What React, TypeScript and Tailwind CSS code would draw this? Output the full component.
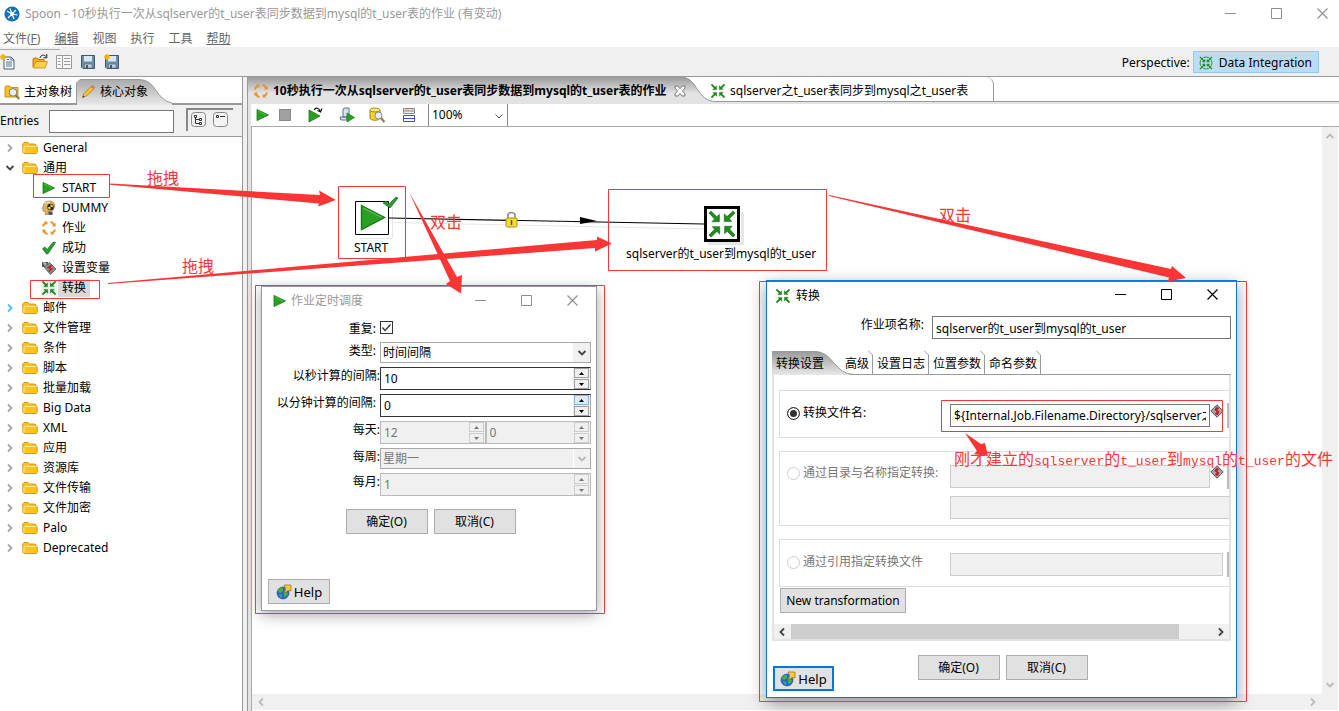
import type { ReactNode } from "react"

const treeFolders = ["邮件", "文件管理", "条件", "脚本", "批量加载", "Big Data", "XML", "应用", "资源库", "文件传输", "文件加密", "Palo", "Deprecated"]

const menus = [
  { label: "文件(", key: "F", rest: ")" },
  { label: "", key: "编辑", rest: "" },
  { label: "视图", key: "", rest: "" },
  { label: "执行", key: "", rest: "" },
  { label: "工具", key: "", rest: "" },
  { label: "", key: "帮助", rest: "" },
]

function Svg({ size = 16, children }: { size?: number; children: ReactNode }) {
  return (
    <svg width={size} height={size} viewBox="0 0 16 16" className="block shrink-0" aria-hidden="true">
      {children}
    </svg>
  )
}

function TransIcon({ size = 16 }: { size?: number }) {
  const arrow = "M1 2.1 2.1 1 5.2 4.1 6.6 2.8V6.8H2.6L4 5.3Z"
  return (
    <Svg size={size}>
      <g fill="#1f8a1f" stroke="#14600f" strokeWidth=".3">
        <path d={arrow} />
        <path d={arrow} transform="rotate(90 8 8)" />
        <path d={arrow} transform="rotate(180 8 8)" />
        <path d={arrow} transform="rotate(270 8 8)" />
      </g>
    </Svg>
  )
}

function JobIcon() {
  const arrow = "M1.2 6.6 1.6 4.4 3.8 2.6 2.8 1.4H6.4V5L5.2 4 3.4 5.4 2.6 6.8Z"
  return (
    <Svg>
      <g fill="#e8922a">
        <path d={arrow} />
        <path d={arrow} transform="rotate(90 8 8)" />
        <path d={arrow} transform="rotate(180 8 8)" />
        <path d={arrow} transform="rotate(270 8 8)" />
      </g>
    </Svg>
  )
}

function PlayIcon({ size = 16 }: { size?: number }) {
  return (
    <Svg size={size}>
      <path d="M2 2.4 13.5 8 2 13.6Z" fill="#2aa022" stroke="#177a14" strokeWidth=".8" />
      <path d="M2.9 3.9 11 8" stroke="#6cc765" strokeWidth=".6" />
    </Svg>
  )
}

function FolderIcon() {
  return (
    <Svg>
      <path d="M.8 12.5V3.8L2 2.5H6L7.2 4H13L14 5V6L15.2 6.5V12.5L14.2 13.5H1.8Z" fill="#fdc21c" stroke="#c88a08" strokeWidth=".8" />
      <path d="M2 13V7.5L3 6.5H14.6" fill="none" stroke="#fff0a0" strokeWidth=".9" />
    </Svg>
  )
}

function CheckIcon({ size = 16 }: { size?: number }) {
  return (
    <Svg size={size}>
      <path d="M1.5 8.8 3.8 7 6.2 9.5 12 2.2 14.6 2.4 7 13.8 5.4 14Z" fill="#2a9a32" stroke="#14691b" strokeWidth=".7" />
    </Svg>
  )
}

function DummyIcon() {
  return (
    <Svg>
      <path d="M4 14.5 4.5 12 2 11 1.8 9.5 1 8.5 2.2 6.5C2 3 5 1 8.5 1 12.5 1 14.500 4 13.500 7.500L12 10.500 8 11.5 7 14.5Z" fill="#d8b060" stroke="#a07b35" strokeWidth=".6" />
      <path d="M4 4C5 2.500 7 2 9 2.200" fill="none" stroke="#f4dfa6" strokeWidth="1.200" />
      <circle cx="9.5" cy="7" r="3.2" fill="#222" />
      <path d="M9.5 7V4.2A3 3 0 0 1 12.2 7ZM9.5 7V9.8A3 3 0 0 1 6.8 7Z" fill="#f3d43b" />
      <path d="M7.5 11.500H11.500V15H7.500Z" fill="#555" />
    </Svg>
  )
}

function VarIcon() {
  return (
    <Svg>
      <path d="M1 2H7V7H1Z" fill="#555" />
      <path d="M2 3H4V6M5 3V6" stroke="#ddd" fill="none" />
      <path d="M3 7 8.5 2.5 15 9 9.5 14.5Z" fill="#8b8b8b" stroke="#555" strokeWidth=".8" />
      <path d="M10.5 5.5 7.5 7.5 10.5 9 8 11.5" fill="none" stroke="#c61b1b" strokeWidth="1.6" />
    </Svg>
  )
}

function DiamondIcon() {
  return (
    <svg width="14" height="14" viewBox="0 0 14 14" className="block shrink-0" aria-hidden="true">
      <path d="M7 .8 13.2 7 7 13.2.8 7Z" fill="#a5a5a5" stroke="#444" strokeWidth=".9" />
      <path d="M8.8 4.3H6L5.4 6 8.4 7.6 7.8 9.5H5.2M7 3V11" fill="none" stroke="#c9141e" strokeWidth="1.3" />
    </svg>
  )
}

function GlobeIcon() {
  return (
    <Svg>
      <circle cx="7" cy="9" r="6" fill="#2468d8" stroke="#1b3f93" strokeWidth=".6" />
      <path d="M1.500 7 4 4 7 4 7 7 4 9ZM3 10 6 11 6 14 4 13ZM8 9 11 8 12 10 10 13 8 12Z" fill="#3eb53a" />
      <path d="M8 1H15V7L13 6.5C11 7 10 8.500 7.5 8.500 9 7.5 9.500 5.5 9.500 4.500Z" fill="#f9c73c" stroke="#9a6d10" strokeWidth=".7" />
    </Svg>
  )
}

function SearchFolder() {
  return (
    <Svg>
      <path d="M1 13V3L2 2H6L7 3.5H14V13Z" fill="#fbc01e" stroke="#b98008" strokeWidth=".8" />
      <circle cx="9" cy="8.4" r="3.8" fill="#e8eef3" stroke="#777" />
      <path d="M11.8 11.2 15.2 15" stroke="#9a7440" strokeWidth="2" />
    </Svg>
  )
}

function PencilIcon() {
  return (
    <Svg>
      <path d="M2.5 13.5 4 9.5 11 2.5 13.5 5 6.5 12Z" fill="#f5c62c" stroke="#9d6b15" strokeWidth=".7" />
      <path d="M11 2.5 12.6 1 15 3.4 13.5 5Z" fill="#df6a72" />
      <path d="M2.5 13.5 3.2 11.5 4.6 12.8Z" fill="#333" />
    </Svg>
  )
}

function FileIcon() {
  return (
    <Svg>
      <path d="M4 3H11L14 6V15H4Z" fill="#f4f8fb" stroke="#456078" />
      <path d="M11 3V6H14M6 8H12M6 10H12M6 12H12M7 5.5H9" fill="none" stroke="#58758c" />
      <path d="M3 0V6M0 3H6M1 1 5 5M5 1 1 5" stroke="#f4b400" strokeWidth="1.3" />
    </Svg>
  )
}

function OpenIcon() {
  return (
    <Svg>
      <path d="M1 13V5L2 4H5L6 5.5H12V8" fill="#f3ad1c" stroke="#bd7d0a" />
      <path d="M1 14 4 7.5H15.5L13 14Z" fill="#ffd046" stroke="#c78a10" strokeWidth=".8" />
      <path d="M8 4C9 .5 12 .5 14 2.5M14.8 0V3.8H11.4" fill="none" stroke="#222" />
    </Svg>
  )
}

function ListIcon() {
  return (
    <Svg>
      <path d="M.5 1.5H15.5V14.5H.5ZM6.500 2V14" fill="#f7f7f7" stroke="#999" />
      <path d="M2 4.5H4.5M2 7.5H4.5M2 10.5H4.5M8 4.5H14M8 7.5H14M8 10.5H14" stroke="#999" />
    </Svg>
  )
}

function SaveIcon({ star = false }: { star?: boolean }) {
  return (
    <Svg>
      <path d="M1.5 1.5H14.5V14.5H3L1.5 13Z" fill="#6d8eac" stroke="#3c5871" />
      <path d="M4 2H12V7.5H4Z" fill="#dce6ee" />
      <path d="M4.5 10H12V14H4.5Z" fill="#c3d0da" stroke="#4b677e" strokeWidth=".6" />
      <path d="M6 11H8V14H6Z" fill="#3c5871" />
      {star && <path d="M3 0V6M0 3H6M1 1 5 5M5 1 1 5" stroke="#f4b400" strokeWidth="1.4" />}
    </Svg>
  )
}

function Chevron({ className }: { className: string }) {
  return (
    <svg width="10" height="10" viewBox="0 0 10 10" className={className} aria-hidden="true">
      <path d="M1.5 3 5 6.5 8.5 3" fill="none" stroke="currentColor" strokeWidth="1.8" />
    </svg>
  )
}

function WindowControls({ tone, className }: { tone: string; className: string }) {
  return (
    <div className={`flex gap-[34px] pb-[2px] ${tone} ${className}`}>
      <button type="button" aria-label="Minimize" className="flex w-3 justify-start">
        <svg width="11" height="11"><path d="M0 5.5H11" stroke="currentColor" /></svg>
      </button>
      <button type="button" aria-label="Maximize" className="flex w-3 justify-start">
        <svg width="11" height="11"><path d="M.5.5H10.5V10.5H.5Z" fill="none" stroke="currentColor" /></svg>
      </button>
      <button type="button" aria-label="Close" className="flex w-3 justify-start">
        <svg width="11" height="11"><path d="M.5.5 10.5 10.5M10.5.5.5 10.5" stroke="currentColor" strokeWidth="1.2" /></svg>
      </button>
    </div>
  )
}

function TreeRow({ label, open = false, hot = false }: { label: string; open?: boolean; hot?: boolean }) {
  return (
    <li className="flex h-5 items-center">
      <span className={`flex w-[22px] pl-[5px] ${hot ? "text-[#4cc2ee]" : open ? "text-[#444]" : "text-[#a6a6a6]"}`}>
        <Chevron className={open ? "" : "-rotate-90"} />
      </span>
      <FolderIcon />
      <span className="ml-[5px]">{label}</span>
    </li>
  )
}

function TreeLeaf({ icon, label, selected = false }: { icon: ReactNode; label: string; selected?: boolean }) {
  return (
    <li className="flex h-5 items-center pl-[41px]">
      <span className={selected ? "bg-[#f0f0f0]" : ""}>{icon}</span>
      <span className={`ml-px px-1 ${selected ? "bg-[#d9d9d9]" : ""}`}>{label}</span>
    </li>
  )
}

function SpinArrows({ disabled = false, hot = false }: { disabled?: boolean; hot?: boolean }) {
  const tone = disabled ? "border-[#ccc] text-[#777]" : "border-[#a0a0a0] text-black"
  return (
    <span className="flex h-full w-[17px] shrink-0 flex-col justify-center gap-px bg-[#f0f0f0] px-px">
      <button type="button" aria-label="Up" disabled={disabled} className={`flex h-[10px] items-center justify-center border ${hot ? "border-[#7eb4ea] bg-[#dcecfc] text-black" : tone}`}>
        <svg width="5" height="3"><path d="M0 3 2.5 0 5 3Z" fill="currentColor" /></svg>
      </button>
      <button type="button" aria-label="Down" disabled={disabled} className={`flex h-[10px] items-center justify-center border ${tone}`}>
        <svg width="5" height="3"><path d="M0 0 2.5 3 5 0Z" fill="currentColor" /></svg>
      </button>
    </span>
  )
}

function Spinner({ id, label, value, disabled = false, hot = false }: { id: string; label?: string; value: string; disabled?: boolean; hot?: boolean }) {
  return (
    <span className={`flex h-[23px] min-w-0 flex-1 border ${disabled ? "border-[#bbb] bg-[#f0f0f0]" : "border-y-[#333] border-l-[#333] border-r-[#a8a8a8] bg-white"}`}>
      <input id={id} aria-label={label} defaultValue={value} disabled={disabled} className={`min-w-0 flex-1 px-[3px] outline-none ${disabled ? "text-[#777]" : "text-black"}`} />
      <SpinArrows disabled={disabled} hot={hot} />
    </span>
  )
}

function Combo({ id, value, disabled = false }: { id: string; value: string; disabled?: boolean }) {
  return (
    <span className="relative flex h-[21px] flex-1">
      <select id={id} disabled={disabled} className={`w-full appearance-none border border-[#a8a8a8] px-[2px] leading-4 opacity-100 ${disabled ? "bg-[#f0f0f0] text-[#777]" : "bg-white"}`}>
        <option>{value}</option>
      </select>
      <span className={`pointer-events-none absolute right-px top-px flex h-[19px] w-[17px] items-center justify-center bg-[#f0f0f0] ${disabled ? "border-l border-white text-[#bbb]" : "text-[#444]"}`}>
        <Chevron className="" />
      </span>
    </span>
  )
}

function Field({ id, label, spaced = false, children }: { id: string; label: string; spaced?: boolean; children: ReactNode }) {
  return (
    <div className="flex items-start">
      <label htmlFor={id} className={`w-[118px] shrink-0 text-right leading-[18px] ${spaced ? "pr-1" : ""}`}>{label}</label>
      {children}
    </div>
  )
}

function Btn({ children, className = "w-[82px] border border-[#adadad]" }: { children: ReactNode; className?: string }) {
  return (
    <button type="button" className={`flex h-[25px] items-center justify-center bg-[#e1e1e1] ${className}`}>
      {children}
    </button>
  )
}

function ScheduleDialog() {
  return (
    <section className="absolute left-[261px] top-[286px] w-[336px] border border-[#999] bg-white pb-[6px] pl-[6px] pr-[5px] shadow-[0_4px_14px_rgba(0,0,0,0.35)]">
      <header className="flex h-7 items-center pl-1 text-[#999]">
        <PlayIcon />
        <h2 className="ml-[3px] flex-1">作业定时调度</h2>
        <WindowControls tone="text-[#8f8f8f]" className="pr-3" />
      </header>
      <div className="-ml-[6px] flex flex-col gap-1 pt-[5px]">
        <Field id="repeat" label="重复:" spaced>
          <span className="relative flex h-[15px] items-start pt-px">
            <input id="repeat" type="checkbox" defaultChecked className="size-[13px] appearance-none border border-[#333] bg-white" />
            <svg width="13" height="13" className="pointer-events-none absolute left-0 top-px"><path d="M2.5 6.5 5 9.5 10.5 3.5" fill="none" stroke="#333" strokeWidth="1.3" /></svg>
          </span>
        </Field>
        <Field id="type" label="类型:" spaced><Combo id="type" value="时间间隔" /></Field>
        <Field id="secs" label="以秒计算的间隔:"><Spinner id="secs" value="10" /></Field>
        <Field id="mins" label="以分钟计算的间隔:" spaced><Spinner id="mins" value="0" hot /></Field>
        <Field id="hour" label="每天:">
          <Spinner id="hour" value="12" disabled />
          <Spinner id="minute" label="分钟" value="0" disabled />
        </Field>
        <Field id="week" label="每周:"><Combo id="week" value="星期一" disabled /></Field>
        <Field id="month" label="每月:"><Spinner id="month" value="1" disabled /></Field>
      </div>
      <div className="mt-[13px] flex justify-center gap-[6px] pl-[2px]">
        <Btn>确定(O)</Btn>
        <Btn>取消(C)</Btn>
      </div>
      <Btn className="mt-[45px] w-[62px] gap-[2px] border border-[#adadad] text-[13px]"><GlobeIcon />Help</Btn>
    </section>
  )
}

function RadioLine({ label, checked = false }: { label: string; checked?: boolean }) {
  return (
    <label className={`flex w-[163px] shrink-0 items-center gap-[3px] ${checked ? "" : "text-[#777]"}`}>
      <input type="radio" name="source" defaultChecked={checked} disabled={!checked} className={`size-[13px] appearance-none rounded-full border ${checked ? "border-[#333] bg-[#333] shadow-[inset_0_0_0_2px_white]" : "border-[#ccc] bg-white"}`} />
      {label}
    </label>
  )
}

function TransDialog() {
  return (
    <section className="absolute left-[766px] top-[280px] w-[471px] border border-[#0a78d0] bg-white pb-[6px] pl-[5px] pr-[5px] shadow-[0_5px_16px_rgba(0,0,0,0.4)]">
      <header className="flex h-[29px] items-center pl-[3px]">
        <TransIcon />
        <h2 className="ml-[5px] flex-1">转换</h2>
        <WindowControls tone="text-black" className="pr-3" />
      </header>
      <div className="flex items-start pt-[6px]">
        <label htmlFor="entry" className="w-[152px] shrink-0 text-right">作业项名称:</label>
        <input id="entry" defaultValue="sqlserver的t_user到mysql的t_user" className="ml-2 h-[23px] min-w-0 flex-1 border border-[#777] px-[3px]" />
      </div>
      <div role="tablist" className="mt-3 flex h-6 border-b border-[#999]">
        <button type="button" role="tab" aria-selected="true" className="relative w-[72px] pt-[2px] text-left">
          <svg width="90" height="24" className="absolute left-0 top-0">
            <defs><linearGradient id="g1" x2="0" y2="1"><stop stopColor="#999" /><stop offset="1" stopColor="#e8e8e8" /></linearGradient></defs>
            <path d="M0 0H42C62 0 62 24 82 24H0Z" fill="url(#g1)" />
            <path d="M42 .5C62 .5 62 23.5 82 23.5" fill="none" stroke="#999" />
          </svg>
          <span className="relative pl-1">转换设置</span>
        </button>
        {["高级", "设置日志", "位置参数", "命名参数"].map((tab) => (
          <button key={tab} type="button" role="tab" className="relative pl-px pr-[7px] pt-[2px]">
            {tab}
            <svg width="8" height="24" className="absolute bottom-0 right-0"><path d="M0 .5 4.5 5V24" fill="none" stroke="#999" /></svg>
          </button>
        ))}
      </div>
      <div className="border-2 border-t-0 border-[#e3e3e3] pl-[5px]">
        <div className="flex h-[63px] pt-[15px]">
          <fieldset className="flex flex-1 items-center border border-r-0 border-[#dcdcdc] pl-[7px] pb-[2px]">
            <RadioLine label="转换文件名:" checked />
            <input aria-label="转换文件名" defaultValue="${Internal.Job.Filename.Directory}/sqlserver之t_user" className="mt-1 h-[23px] w-[260px] border border-[#777] px-[3px]" />
            <span className="mb-1"><DiamondIcon /></span>
            <span className="ml-auto mt-1 h-[25px] w-[2px] bg-[#bbb]" />
          </fieldset>
        </div>
        <fieldset className="mt-[13px] flex h-[75px] items-start border border-r-0 border-[#dcdcdc] pl-[7px] pt-3">
          <RadioLine label="通过目录与名称指定转换:" />
          <span className="flex min-w-0 flex-1 flex-col gap-[7px]">
            <span className="flex items-center">
              <input aria-label="目录" disabled className="h-[23px] w-[260px] border border-[#ccc] bg-[#f0f0f0]" />
              <span className="mb-[10px]"><DiamondIcon /></span>
              <span className="ml-auto h-[25px] w-[2px] bg-[#bbb]" />
            </span>
            <input aria-label="名称" disabled className="h-[23px] border border-r-0 border-[#ccc] bg-[#f0f0f0]" />
          </span>
        </fieldset>
        <fieldset className="mt-[13px] flex h-12 items-center border border-r-0 border-[#dcdcdc] pl-[7px]">
          <span className="pb-[2px]"><RadioLine label="通过引用指定转换文件" /></span>
          <input aria-label="引用" disabled className="mr-1 mt-[2px] h-[23px] min-w-0 flex-1 border border-[#ccc] bg-[#f0f0f0]" />
          <span className="mt-[2px] h-[25px] w-[2px] bg-[#bbb]" />
        </fieldset>
        <Btn className="ml-px mt-px w-[126px] border border-[#adadad]">New transformation</Btn>
        <div className="-ml-[5px] mt-[11px] flex h-[15px] items-center bg-[#f0f0f0] text-[#444]">
          <Chevron className="ml-[3px] mr-1 rotate-90" />
          <span className="h-full flex-[388] bg-[#cdcdcd]" />
          <span className="flex-[34]" />
          <Chevron className="mx-[3px] -rotate-90" />
        </div>
      </div>
      <div className="flex justify-center gap-[6px] pl-[2px] pt-[14px]">
        <Btn>确定(O)</Btn>
        <Btn>取消(C)</Btn>
      </div>
      <Btn className="-mt-[14px] ml-px w-[61px] gap-[2px] border-2 border-[#0078d7] text-[13px]"><GlobeIcon />Help</Btn>
    </section>
  )
}

function Canvas() {
  return (
    <svg width="700" height="150" className="absolute left-0 top-0 overflow-visible" aria-hidden="true">
      <g transform="translate(-252 -127)">
        <path d="M360 238.5H392.500V205M394 222.500 704 229M575 223H600" fill="none" stroke="#e6e6e6" />
        <path d="M708 243.500H742.500V212" fill="none" stroke="#e6e6e6" strokeWidth="3" />
        <path d="M389 218 704 224" stroke="#000" strokeWidth="1.2" />
        <path d="M580 217 597 221 580 224Z" fill="#000" />
        <path d="M355.5 201.5H388.5V234.5H355.5Z" fill="#fff" stroke="#000" />
        <path d="M361.500 205.500 384.500 217.500 361.500 229.500Z" fill="#2aa022" stroke="#187815" strokeWidth="1.4" />
        <path d="M363 208 382 217.500" stroke="#6cc765" />
        <path d="M383 203 386 201 389 204 396 197 398 198 390 208Z" fill="#2a9a32" stroke="#14691b" strokeWidth=".7" />
        <path d="M705.500 207.500H738.500V240.500H705.500Z" fill="#fff" stroke="#000" strokeWidth="3" />
        <path d="M508 220V214Q511.500 211 515 214V220" fill="none" stroke="#888" strokeWidth="1.600" />
        <rect x="506" y="218" width="11" height="9" rx="1.500" fill="#f5dc2e" stroke="#a88f10" />
        <path d="M511.500 220V225" stroke="#555" strokeWidth="1.500" />
        <g transform="translate(707 209)"><TransIcon size={30} /></g>
      </g>
    </svg>
  )
}

function Annotations() {
  return (
    <div className="pointer-events-none absolute inset-0 font-['Liberation_Mono','Noto_Sans_CJK_SC',monospace] text-base leading-5 text-[#f93535]">
      <svg width="1339" height="711" className="absolute left-0 top-0" aria-hidden="true">
        <g fill="none" stroke="#f93535">
          <path d="M33.5 174.500H109.500V197.500H33.500ZM30.500 280.500H99.500V298.500H30.500ZM338.500 186.500H405.500V258.500H338.500ZM608.500 189.500H826.500V270.500H608.500Z" />
          <path d="M255.500 285.500H604.500V613.500H255.500ZM759.500 281.500H1246.500V701.500H759.500ZM941.500 400.500H1222.500V431.500H941.500Z" />
        </g>
        <g fill="#f93535">
          <path d="M110 183.500 320 195 319 190.500 336 200 318 206.500 319 203.500 110 184.700Z" />
          <path d="M108 283 597 240 597 236.500 612 243.500 595 251.500 595 248 108 284Z" />
          <path d="M409 192 457 277 462 275 461 293.500 446 284 450 281Z" />
          <path d="M829 195 1171 269 1172 266 1186 278 1168 281.500 1169 277.500 829 196Z" />
          <path d="M965 433 981 444 985 443 988 456 974 454 977 451Z" />
        </g>
      </svg>
      <span className="absolute left-[147px] top-[170px]">拖拽</span>
      <span className="absolute left-[182px] top-[258px]">拖拽</span>
      <span className="absolute left-[430px] top-[214px]">双击</span>
      <span className="absolute left-[939px] top-[207px]">双击</span>
      <span className="absolute left-[954px] top-[451px] whitespace-nowrap">
        刚才建立的<span className="text-[13px]">sqlserver</span>的<span className="text-[13px]">t_user</span>到<span className="text-[13px]">mysql</span>的<span className="text-[13px]">t_user</span>的文件
      </span>
    </div>
  )
}

function Sidebar() {
  return (
    <aside className="flex w-[243px] shrink-0 flex-col border-r border-[#999] bg-white">
      <div role="tablist" className="flex h-7 items-center border-b-2 border-[#999] pl-1 pt-[2px]">
        <button type="button" role="tab" className="flex w-[73px] items-center gap-1 pt-px"><SearchFolder />主对象树</button>
        <button type="button" role="tab" aria-selected="true" className="relative flex h-full items-center gap-1 pt-px">
          <svg width="100" height="26" className="absolute -left-1 top-0">
            <defs><linearGradient id="g2" x2="0" y2="1"><stop stopColor="#aaa" /><stop offset="1" stopColor="#e8e8e8" /></linearGradient></defs>
            <path d="M3.500 26V4L7 .5H66C84 .5 82 21 99 24V26Z" fill="url(#g2)" />
            <path d="M3.500 26V4L7 .5H66C84 .5 82 21 99 24" fill="none" stroke="#999" />
          </svg>
          <span className="relative ml-[3px]"><PencilIcon /></span>
          <span className="relative">核心对象</span>
        </button>
      </div>
      <div className="flex h-8 items-center border-b border-[#999] bg-[#f0f0f0]">
        <label htmlFor="entries" className="w-[49px]">Entries</label>
        <input id="entries" className="mt-[2px] h-[23px] w-[125px] border border-[#777] bg-white px-1" />
        <div className="mb-[3px] ml-3 flex h-[23px] w-[47px] items-center justify-center gap-[6px] border-l-2 border-t-2 border-[#888] pr-[2px]">
          <button type="button" aria-label="Expand all">
            <svg width="16" height="16"><rect x=".5" y=".5" width="14" height="14" rx="3" fill="#f4f4f4" stroke="#888" /><path d="M4.500 5V11.500H8M4.500 7.500H8M3.500 3.500H5.500V5.500H3.500ZM8.500 6.500H10.500V8.500H8.500ZM8.500 10.500H10.500V12.500H8.500Z" fill="none" stroke="#333" /></svg>
          </button>
          <button type="button" aria-label="Collapse all">
            <svg width="16" height="16"><rect x=".5" y=".5" width="14" height="14" rx="3" fill="#f4f4f4" stroke="#888" /><path d="M3.500 3.500H5.500V5.500H3.500ZM7 4.500H12" fill="none" stroke="#333" /></svg>
          </button>
        </div>
      </div>
      <ul className="pt-px">
        <TreeRow label="General" />
        <TreeRow label="通用" open />
        <TreeLeaf icon={<PlayIcon />} label="START" />
        <TreeLeaf icon={<DummyIcon />} label="DUMMY" />
        <TreeLeaf icon={<JobIcon />} label="作业" />
        <TreeLeaf icon={<CheckIcon />} label="成功" />
        <TreeLeaf icon={<VarIcon />} label="设置变量" />
        <TreeLeaf icon={<TransIcon />} label="转换" selected />
        {treeFolders.map((label, i) => (
          <TreeRow key={label} label={label} hot={i === 0} />
        ))}
      </ul>
    </aside>
  )
}

function Editor() {
  return (
    <main className="ml-1 flex min-w-0 flex-1 flex-col border-l border-[#999]">
      <div role="tablist" className="relative flex h-[27px] shrink-0 items-center border-b-2 border-[#e3e3e3] bg-white">
        <svg width="468" height="27" className="absolute left-0 top-0">
          <defs><linearGradient id="g3" x2="0" y2="1"><stop stopColor="#999" /><stop offset=".6" stopColor="#e3e3e3" /></linearGradient></defs>
          <path d="M0 0H434C450 0 448 24 468 24V27H0Z" fill="url(#g3)" />
          <path d="M434 .5C450 .5 448 24.500 468 24.500" fill="none" stroke="#999" />
        </svg>
        <button type="button" role="tab" aria-selected="true" className="relative flex w-[460px] items-center gap-1 whitespace-nowrap pl-[5px] pt-[2px] font-bold">
          <JobIcon />
          10秒执行一次从sqlserver的t_user表同步数据到mysql的t_user表的作业
          <svg width="12" height="12" viewBox="0 0 12 12" className="ml-[3px]"><path d="M1 1H4L6 3.500 8 1H11V3L8.500 6 11 9V11H8L6 8.500 4 11H1V9L3.500 6 1 3Z" fill="#fff" stroke="#777" /></svg>
        </button>
        <span className="flex h-full w-[286px] items-center rounded-tr-lg border-r border-[#999] pt-[2px]">
          <button type="button" role="tab" className="flex items-center gap-1 whitespace-nowrap pl-[2px]"><TransIcon />sqlserver之t_user表同步到mysql之t_user表</button>
        </span>
        <span className="absolute bottom-0 left-[468px] right-0 h-px bg-[#999]" />
      </div>
      <div className="flex min-h-0 flex-1 flex-col border-l-[3px] border-[#e3e3e3]">
        <div className="flex h-[23px] shrink-0 items-center border-b border-[#aaa] bg-white pl-1">
          <button type="button" aria-label="Run"><PlayIcon /></button>
          <button type="button" aria-label="Stop" className="ml-2 size-3 border border-[#8a8a8a] bg-[#a0a0a0]" />
          <button type="button" aria-label="Replay" className="ml-4">
            <Svg><path d="M2 3 13 9 2 15Z" fill="#2aa022" stroke="#177a14" strokeWidth=".8" /><path d="M7 3C9 0 12 1 13 4M15 1.500 13.500 5 10.500 3.500" fill="none" stroke="#111" strokeWidth="1.200" /></Svg>
          </button>
          <button type="button" aria-label="Check SQL" className="ml-4">
            <Svg><path d="M4 2 6 1H10V10H4ZM1 10H8V13H2Z" fill="#d9e2ee" stroke="#5b7390" /><path d="M8 6 15.500 10.500 8 15Z" fill="#2aa022" stroke="#177a14" strokeWidth=".7" /></Svg>
          </button>
          <button type="button" aria-label="Explore database" className="ml-[14px]">
            <Svg><path d="M1 3V11C1 14 11 14 11 11V3" fill="#f5d32d" stroke="#a8830f" /><ellipse cx="6" cy="3" rx="5" ry="2" fill="#fdec85" stroke="#a8830f" /><circle cx="9.500" cy="8.500" r="3.500" fill="#e5edf3" stroke="#888" /><path d="M12 11 15.500 15" stroke="#9a7440" strokeWidth="2" /></Svg>
          </button>
          <button type="button" aria-label="Show results" className="ml-4">
            <Svg><path d="M2.500 1.500H13.500V6.500H2.500ZM2.500 4H13.500" fill="#eef" stroke="#888" /><path d="M2.500 8.500H13.500V14.500H2.500ZM2.500 11.500H13.500" fill="#fff" stroke="#3a4be0" /><path d="M4 3H8M10 3H12" stroke="#e0a030" /></Svg>
          </button>
          <span className="relative ml-[11px] flex h-full w-20 border-x border-[#888]">
            <select aria-label="Zoom" className="w-full appearance-none bg-white px-[3px]"><option>100%</option></select>
            <svg width="10" height="10" className="pointer-events-none absolute right-[3px] top-2" aria-hidden="true"><path d="M1.500 2.500 5 6 8.500 2.500" fill="none" stroke="#555" /></svg>
          </span>
        </div>
        <div className="flex min-h-0 flex-1 border-l border-[#aaa] bg-white pr-px">
          <div className="flex min-w-0 flex-1 flex-col">
            <div className="relative min-h-0 flex-1">
              <Canvas />
              <span className="absolute left-[102px] top-[112px]">START</span>
              <span className="absolute left-[374px] top-[118px] whitespace-nowrap">sqlserver的t_user到mysql的t_user</span>
            </div>
            <div className="mb-px flex h-4 items-center justify-between bg-[#f0f0f0] px-1 text-[#bbb]">
              <Chevron className="rotate-90" />
              <Chevron className="-rotate-90" />
            </div>
          </div>
          <div className="mb-px flex w-4 flex-col items-center justify-between bg-[#f0f0f0] pb-5 pt-1 text-[#bbb]">
            <Chevron className="rotate-180" />
            <Chevron className="" />
          </div>
        </div>
      </div>
    </main>
  )
}

export default function App() {
  return (
    <div className="relative flex h-screen flex-col overflow-hidden bg-[#f0f0f0] font-['Noto_Sans','Noto_Sans_CJK_SC',sans-serif] text-xs leading-[18px] text-black">
      <header className="flex h-7 shrink-0 items-center bg-white pl-1 text-[#999]">
        <Svg>
          <circle cx="8" cy="8" r="7.600" fill="#1671b8" />
          <path d="M8 8 3 5M8 8 6 2.500M8 8 12 4M8 8 13.500 9M8 8 10 13M8 8 4 12" stroke="#fff" strokeWidth="1.200" />
          <circle cx="8" cy="8" r="2" fill="#fff" />
        </Svg>
        <h1 className="ml-[5px] flex-1">Spoon - 10秒执行一次从sqlserver的t_user表同步数据到mysql的t_user表的作业 (有变动)</h1>
        <WindowControls tone="text-[#8f8f8f]" className="pr-[10px]" />
      </header>
      <nav className="flex h-[19px] shrink-0 items-center gap-[14px] bg-white pl-[3px] pt-[2px] text-[#666]">
        {menus.map((m) => (
          <button key={m.label + m.key} type="button">{m.label}<u>{m.key}</u>{m.rest}</button>
        ))}
      </nav>
      <div className="relative flex h-[29px] shrink-0 items-center">
        <span className="absolute left-0 top-[2px] h-px w-[60px] bg-[#aaa]" />
        <button type="button" aria-label="New" className="mr-4"><FileIcon /></button>
        <button type="button" aria-label="Open" className="mr-2"><OpenIcon /></button>
        <button type="button" aria-label="Explore" className="mr-2"><ListIcon /></button>
        <button type="button" aria-label="Save" className="mr-2"><SaveIcon /></button>
        <button type="button" aria-label="Save as"><SaveIcon star /></button>
        <span className="ml-auto mr-[3px] pt-[2px]">Perspective:</span>
        <button type="button" className="mr-5 mt-px flex h-[22px] items-center gap-[6px] border border-[#90c8f6] bg-[#bcdcf4] pl-[5px] pr-[6px] pt-px">
          <svg width="14" height="14" viewBox="0 0 16 16" aria-hidden="true">
            <circle cx="8" cy="8" r="6.800" fill="none" stroke="#1f8a1f" />
            <path d="M1 1 6 6M15 1 10 6M1 15 6 10M15 15 10 10M6.500 4V6.500H4M9.500 4V6.500H12M4 9.500H6.500V12M12 9.500H9.500V12" fill="none" stroke="#1f8a1f" strokeWidth="1.300" />
          </svg>
          Data Integration
        </button>
      </div>
      <div className="flex min-h-0 flex-1 border-t border-[#999]">
        <Sidebar />
        <Editor />
      </div>
      <ScheduleDialog />
      <TransDialog />
      <Annotations />
    </div>
  )
}
